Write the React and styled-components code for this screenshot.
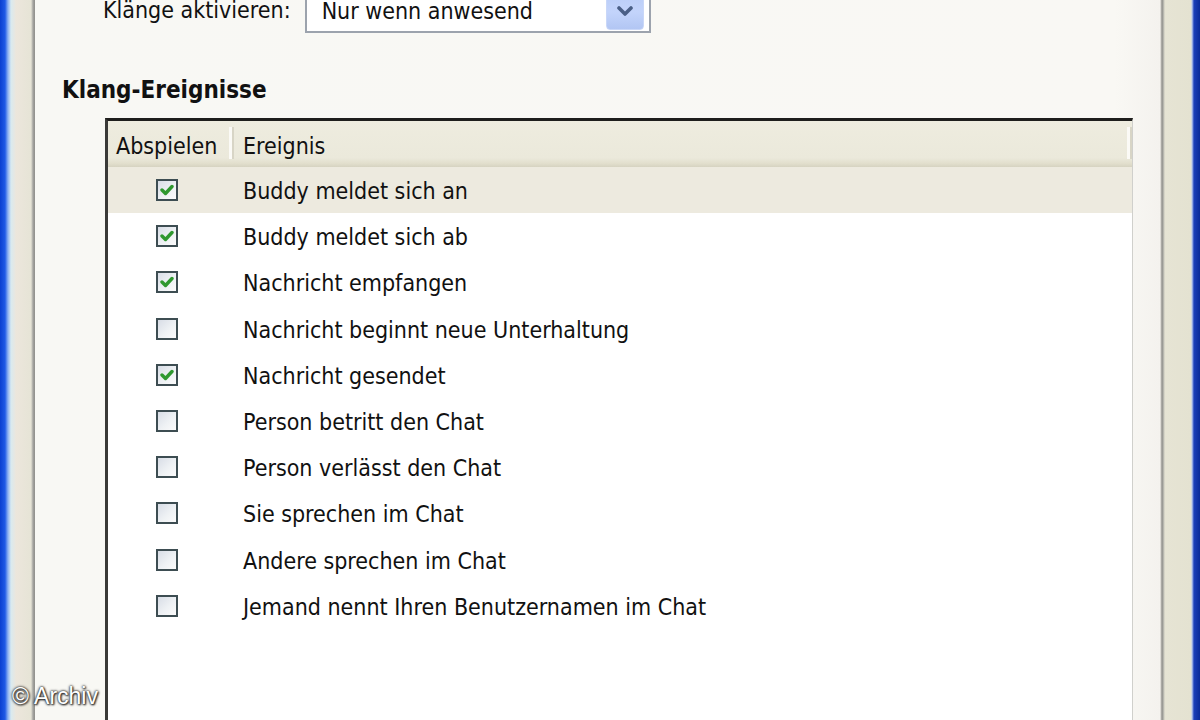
import React from 'react';
import styled, { createGlobalStyle } from 'styled-components';

const Global = createGlobalStyle`
  html, body {
    margin: 0;
    padding: 0;
    overflow: hidden;
  }
  body {
    font-family: "DejaVu Sans Condensed", "DejaVu Sans", Tahoma, sans-serif;
    font-stretch: semi-condensed;
    color: #111;
  }
`;

const Screen = styled.div`
  position: relative;
  display: flex;
  width: 1200px;
  height: 720px;
  overflow: hidden;
  background: #f8f7f3;
`;

const LeftFrame = styled.div`
  width: 35px;
  flex: none;
  background: linear-gradient(
    to right,
    #0a3fd0 0px, #1f5ae6 5px, #8fb3f2 8px, #d9eaf0 11px,
    #ece6dc 16px, #e6e4d6 31px, #a4a4a0 33px, #8e8e8a 35px
  );
`;

const RightFrame = styled.div`
  width: 40px;
  flex: none;
  background: linear-gradient(
    to right,
    #f3f1ec 0px, #c8c6c0 1px, #8c8c88 2px, #a8a8a2 3px, #e6e4d4 5px,
    #e4e2d1 31px, #b8c8ef 32px, #1b3fb8 34px, #0a2a98 40px
  );
`;

const Panel = styled.div`
  flex: 1;
  display: flex;
  flex-direction: column;
  background: linear-gradient(to right, #f8f8f4, #f9f8f4 96%, #f4f2ee);
`;

const SettingRow = styled.div`
  display: flex;
  align-items: center;
  gap: 14px;
  margin-top: -19px;
  padding-left: 68px;
  height: 52px;
`;

const Label = styled.span`
  font-size: 23px;
  margin-top: 5px;
`;

const Select = styled.div`
  box-sizing: border-box;
  width: 346px;
  height: 52px;
  display: flex;
  align-items: center;
  justify-content: space-between;
  padding: 0 5px 0 15px;
  background: #fff;
  border: 2px solid #9ca3ad;
  font-size: 23px;
`;

const SelectText = styled.span`
  margin-top: 8px;
`;

const ArrowButton = styled.div`
  width: 38px;
  height: 44px;
  margin-top: 2px;
  border-radius: 4px;
  background: linear-gradient(to bottom, #b7cbf6, #c3d4fb 60%, #b2c6f3);
  border: 1px solid #c9d7f8;
  display: flex;
  align-items: center;
  justify-content: center;
  padding-top: 8px;
  box-sizing: border-box;
`;

const Heading = styled.h2`
  margin: 44px 0 15px 27px;
  font-size: 24px;
  line-height: 26px;
  font-weight: bold;
  font-stretch: semi-condensed;
`;

const List = styled.div`
  flex: 1;
  margin-left: 70px;
  width: 1028px;
  box-sizing: border-box;
  background: #fff;
  border-top: 3px solid #1e1e1c;
  border-left: 3px solid #3a3a38;
  border-right: 1px solid #d0d0cc;
`;

const HeaderRow = styled.div`
  display: flex;
  height: 46px;
  box-sizing: border-box;
  background: linear-gradient(to bottom, #eeecdf, #ebe9db 80%, #e2dfcd 92%, #d6d3c1);
  font-size: 23px;
`;

const HeaderCell = styled.div`
  display: flex;
  align-items: center;
  box-sizing: border-box;
  width: ${p => p.$w ? `${p.$w}px` : 'auto'};
  flex: ${p => p.$w ? 'none' : '1'};
  padding-left: ${p => p.$pad}px;
  padding-top: 5px;
  border-right: 2px solid #d8d5c6;
  box-shadow: inset -3px 0 0 #fbfaf6;
  margin: 6px 0 8px;
`;

const Row = styled.div`
  display: flex;
  align-items: center;
  height: 46.2px;
  background: ${p => p.$active ? '#edeadf' : '#fff'};
  font-size: 23px;
`;

const CheckCell = styled.div`
  width: 118px;
  flex: none;
  display: flex;
  justify-content: center;
  box-sizing: border-box;
`;

const Box = styled.div`
  width: 22px;
  height: 22px;
  box-sizing: border-box;
  border: 2px solid #3d4d52;
  background: linear-gradient(135deg, #d8dde6, #eef1f4 55%, #fbfbfb);
  display: flex;
  align-items: center;
  justify-content: center;
`;

const EventText = styled.div`
  padding-left: 17px;
  padding-top: 2px;
  white-space: nowrap;
`;

const Watermark = styled.div`
  position: absolute;
  left: 12px;
  top: 683px;
  font-family: "Liberation Sans", Arial, sans-serif;
  font-stretch: normal;
  font-size: 23px;
  color: #fff;
  text-shadow: 0 0 2px #222, 0 0 3px #333, 1px 1px 2px #222;
`;

const events = [
  [true, 'Buddy meldet sich an'],
  [true, 'Buddy meldet sich ab'],
  [true, 'Nachricht empfangen'],
  [false, 'Nachricht beginnt neue Unterhaltung'],
  [true, 'Nachricht gesendet'],
  [false, 'Person betritt den Chat'],
  [false, 'Person verlässt den Chat'],
  [false, 'Sie sprechen im Chat'],
  [false, 'Andere sprechen im Chat'],
  [false, 'Jemand nennt Ihren Benutzernamen im Chat'],
];

const Check = () => (
  <svg width="14" height="12" viewBox="0 0 14 12">
    <path d="M2 6 L5.5 9.5 L12 2.5" fill="none" stroke="#2f982f" strokeWidth="3.4" strokeLinecap="round" strokeLinejoin="round" />
  </svg>
);

const Chevron = () => (
  <svg width="18" height="12" viewBox="0 0 18 12">
    <path d="M3 2 L9 8 L15 2" fill="none" stroke="#4a5f86" strokeWidth="3.6" strokeLinecap="round" strokeLinejoin="round" />
  </svg>
);

export default function App() {
  return (
    <>
      <Global />
      <Screen>
        <LeftFrame />
        <Panel>
          <SettingRow>
            <Label>Klänge aktivieren:</Label>
            <Select>
              <SelectText>Nur wenn anwesend</SelectText>
              <ArrowButton><Chevron /></ArrowButton>
            </Select>
          </SettingRow>
          <Heading>Klang-Ereignisse</Heading>
          <List>
            <HeaderRow>
              <HeaderCell $w={126} $pad={8}>Abspielen</HeaderCell>
              <HeaderCell $pad={9}>Ereignis</HeaderCell>
            </HeaderRow>
            {events.map(([on, name], i) => (
              <Row key={name} $active={i === 0}>
                <CheckCell>
                  <Box>{on && <Check />}</Box>
                </CheckCell>
                <EventText>{name}</EventText>
              </Row>
            ))}
          </List>
        </Panel>
        <RightFrame />
        <Watermark>© Archiv</Watermark>
      </Screen>
    </>
  );
}
